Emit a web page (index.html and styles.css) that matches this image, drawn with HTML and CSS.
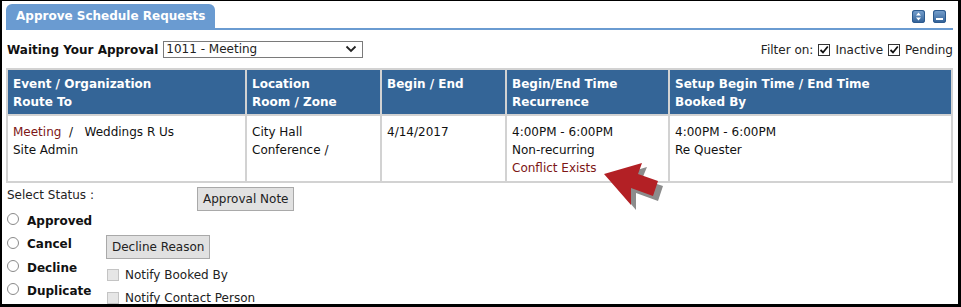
FILE: index.html
```html
<!DOCTYPE html>
<html lang="en">
<head>
  <meta charset="UTF-8" />
  <title>Approve Schedule Requests</title>
  <link rel="stylesheet" href="styles.css">
</head>
<body>
<div class="frame">

  <div class="panel-head">
    <div class="tab">Approve Schedule Requests</div>
    <div class="tools">
      <span class="tool">
        <svg width="13" height="13" viewBox="0 0 13 13"><path d="M6.5 2.5 L9 5.5 L4 5.5 Z M6.5 10.5 L9 7.5 L4 7.5 Z" fill="#fff"/></svg>
      </span>
      <span class="tool">
        <svg width="13" height="13" viewBox="0 0 13 13"><rect x="3" y="8" width="7" height="2" fill="#fff"/></svg>
      </span>
    </div>
  </div>

  <div class="toolbar">
    <span class="waiting">Waiting Your Approval</span>
    <div class="select">
      <span>1011 - Meeting</span>
      <svg width="12" height="8" viewBox="0 0 12 8"><path d="M1.5 1.5 L6 6 L10.5 1.5" fill="none" stroke="#222" stroke-width="1.8"/></svg>
    </div>
    <div class="filter">
      Filter on:
      <span class="check on"><svg width="10" height="10" viewBox="0 0 10 10"><path d="M1.5 5 L4 7.5 L8.8 1.5" fill="none" stroke="#111" stroke-width="1.8"/></svg></span>
      Inactive
      <span class="check on"><svg width="10" height="10" viewBox="0 0 10 10"><path d="M1.5 5 L4 7.5 L8.8 1.5" fill="none" stroke="#111" stroke-width="1.8"/></svg></span>
      Pending
    </div>
  </div>

  <table class="requests">
    <colgroup>
      <col style="width: 239px">
      <col style="width: 135px">
      <col style="width: 125px">
      <col style="width: 163px">
      <col>
    </colgroup>
    <thead>
      <tr>
        <th>Event / Organization<br>Route To</th>
        <th>Location<br>Room / Zone</th>
        <th>Begin / End</th>
        <th>Begin/End Time<br>Recurrence</th>
        <th>Setup Begin Time / End Time<br>Booked By</th>
      </tr>
    </thead>
    <tbody>
      <tr>
        <td><span class="link">Meeting</span> &nbsp;/ &nbsp;&nbsp;Weddings R Us<br>Site Admin</td>
        <td>City Hall<br>Conference /</td>
        <td>4/14/2017</td>
        <td>4:00PM - 6:00PM<br>Non-recurring<br><span class="link">Conflict Exists</span></td>
        <td>4:00PM - 6:00PM<br>Re Quester</td>
      </tr>
    </tbody>
  </table>

  <div class="status">
    <div class="status-title">Select Status :</div>
    <div class="note-cell"><button class="btn">Approval Note</button></div>

    <label class="choice r1"><span class="radio"></span>Approved</label>
    <label class="choice r2"><span class="radio"></span>Cancel</label>
    <div class="extra r2 reason"><button class="btn">Decline Reason</button></div>
    <label class="choice r3"><span class="radio"></span>Decline</label>
    <div class="extra r3 notify"><span class="check off"></span>Notify Booked By</div>
    <label class="choice r4"><span class="radio"></span>Duplicate</label>
    <div class="extra r4 notify"><span class="check off"></span>Notify Contact Person</div>
  </div>

  <svg class="arrow" width="80" height="60" viewBox="0 0 80 60">
    <polygon points="15,22 53,11 48,23 69,30 64,45 42,37 42,54" fill="#8c8c8c"/>
    <polygon points="10,18 48,7 44,18 64,25 59,40 37,32 37,49" fill="#b32025"/>
  </svg>

</div>
</body>
</html>
```

FILE: styles.css
```css
body {
  margin: 0;
  font-family: "DejaVu Sans", Verdana, sans-serif;
  font-size: 12px;
  color: #111;
}
.frame {
  position: relative;
  box-sizing: border-box;
  width: 961px;
  height: 307px;
  overflow: hidden;
  background: #fff;
  border-style: solid;
  border-color: #000;
  border-width: 1px 3px 3px 2px;
  padding: 3px 5px 0 4px;
}

/* panel header */
.panel-head {
  display: flex;
  align-items: flex-end;
  justify-content: space-between;
  border-bottom: 2px solid #6a9bd1;
}
.tab {
  background: #6a9bd1;
  color: #fff;
  font-weight: bold;
  font-size: 12px;
  white-space: nowrap;
  height: 24px;
  line-height: 25px;
  padding: 0 10px;
  min-width: 186px;
  border-radius: 6px 6px 0 0;
}
.tools {
  display: flex;
  gap: 8px;
  margin-right: 7px;
  margin-bottom: 5px;
}
.tool {
  display: block;
  width: 13px;
  height: 13px;
  border-radius: 3px;
  background: linear-gradient(#7aa3d0, #2f5f96);
  box-shadow: inset 0 0 0 1px #2c5a8e;
}
.tool svg { display: block; }

/* filter row */
.toolbar {
  display: flex;
  align-items: center;
  height: 38px;
}
.waiting {
  font-weight: bold;
  margin: 2px 5px 0 1px;
}
.select {
  box-sizing: border-box;
  width: 200px;
  height: 17px;
  border: 1px solid #7a7a7a;
  display: flex;
  align-items: center;
  justify-content: space-between;
  padding: 0 5px 0 2px;
  color: #222;
}
.filter {
  margin-left: auto;
  display: flex;
  align-items: center;
  gap: 5px;
  margin-top: 2px;
  color: #222;
}
.check {
  box-sizing: border-box;
  display: inline-flex;
  align-items: center;
  justify-content: center;
  width: 12px;
  height: 12px;
}
.check.on {
  border: 1px solid #333;
  background: #fff;
}
.check.off {
  border: 1px solid #c4c4c4;
  background: #e6e6e6;
}

/* requests table */
.requests {
  width: 947px;
  table-layout: fixed;
  border-collapse: collapse;
}
.requests th,
.requests td {
  border: 2px solid #d2d2d2;
  text-align: left;
  vertical-align: top;
  line-height: 18px;
}
.requests th {
  background: #346597;
  color: #fff;
  font-weight: bold;
  padding: 5px 5px 3px 5px;
}
.requests td {
  padding: 7px 5px 4px 5px;
  color: #111;
}
.link { color: #7d1616; }

/* status area */
.status {
  display: grid;
  grid-template-columns: 100px 91px 1fr;
  grid-template-rows: 25px 23px 24px 23px 23px;
  margin-top: 1px;
}
.status-title {
  grid-column: 1 / 3;
  grid-row: 1;
  padding: 4px 0 0 1px;
  color: #222;
}
.note-cell {
  grid-column: 3;
  grid-row: 1;
  padding-top: 3px;
}
.btn {
  font-family: "DejaVu Sans", Verdana, sans-serif;
  font-size: 12px;
  color: #222;
  background: #e1e1e1;
  border: 1px solid #a9a9a9;
  height: 24px;
  padding: 0 5px;
  margin: 0;
}
.choice {
  grid-column: 1;
  display: flex;
  align-items: center;
  font-weight: bold;
  gap: 8px;
  padding-left: 1px;
}
.choice .radio { margin-top: -3px; }
.radio {
  box-sizing: border-box;
  width: 12px;
  height: 12px;
  border-radius: 50%;
  border: 1px solid #8a8a8a;
  background: #fff;
}
.r1 { grid-row: 2; }
.r2 { grid-row: 3; }
.r3 { grid-row: 4; }
.r4 { grid-row: 5; }
.extra {
  grid-column: 2 / 4;
  display: flex;
  align-items: center;
}
.reason { padding-top: 6px; }
.notify {
  gap: 6px;
  padding: 15px 0 0 1px;
  color: #222;
}

.arrow {
  position: absolute;
  left: 592px;
  top: 155px;
}
```
